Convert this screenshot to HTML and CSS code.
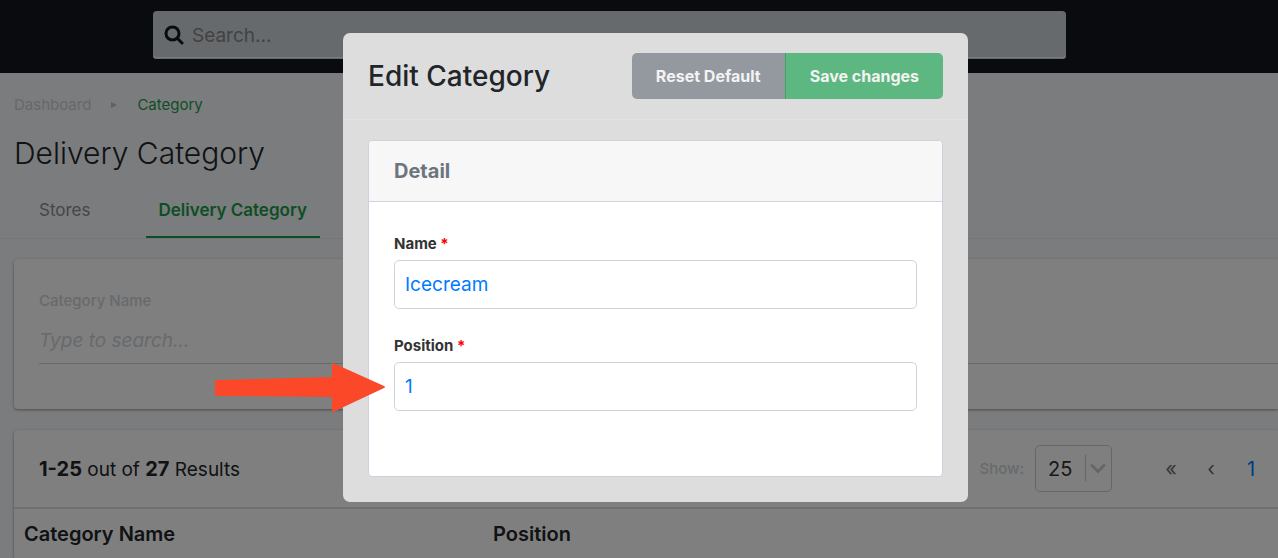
FILE: index.html
```html
<!DOCTYPE html>
<html lang="en">
  <head>
    <meta charset="utf-8" />
    <link rel="stylesheet" href="styles.css">
    <title>Delivery Category</title>
  </head>
  <body>
    <header class="topbar">
      <form class="search">
        <svg class="search-icon" viewBox="0 0 20 20">
          <circle cx="8.5" cy="8.5" r="6.5" />
          <path d="M13.5 13.5L18 18" />
        </svg>
        <input class="search-input" type="text" placeholder="Search..." aria-label="Search" />
      </form>
    </header>

    <main>
      <nav class="breadcrumb">
        <a class="breadcrumb-link" href="#">Dashboard</a>
        <span class="breadcrumb-arrow"></span>
        <a class="breadcrumb-link active" href="#">Category</a>
      </nav>
      <h1 class="page-title">Delivery Category</h1>
      <nav class="tabs">
        <a class="tab" href="#">Stores</a>
        <a class="tab active" href="#">Delivery Category</a>
      </nav>

      <div class="content">
        <section class="card filter">
          <label class="filter-label" for="filter-name">Category Name</label>
          <input class="filter-input" id="filter-name" type="text" placeholder="Type to search..." />
        </section>

        <section class="card">
          <div class="toolbar">
            <div class="results"><b>1-25</b> out of <b>27</b> Results</div>
            <label class="show-label" for="page-size">Show:</label>
            <div class="page-size">
              <select class="page-size-select" id="page-size">
                <option>25</option>
                <option>50</option>
              </select>
              <svg class="page-size-icon" viewBox="0 0 26 26">
                <path class="divider" d="M0.5 0V26" />
                <path class="chevron" d="M7 10.5L13 16.5L19 10.5" />
              </svg>
            </div>
            <div class="pagination">
              <a class="page-link" href="#">«</a>
              <a class="page-link" href="#">‹</a>
              <a class="page-link active" href="#">1</a>
            </div>
          </div>
          <table class="table">
            <thead>
              <tr>
                <th>Category Name</th>
                <th>Position</th>
              </tr>
            </thead>
          </table>
        </section>
      </div>
    </main>

    <div class="overlay">
      <div class="modal" role="dialog" aria-labelledby="modal-title">
        <div class="modal-header">
          <h2 class="modal-title" id="modal-title">Edit Category</h2>
          <div class="btn-group">
            <button class="btn btn-reset" type="button">Reset Default</button>
            <button class="btn btn-save" type="button">Save changes</button>
          </div>
        </div>
        <div class="modal-body">
          <div class="panel">
            <h3 class="panel-header">Detail</h3>
            <form class="panel-body">
              <div class="form-group">
                <label class="form-label" for="name">Name <span class="required">*</span></label>
                <input class="form-input" id="name" type="text" value="Icecream" />
              </div>
              <div class="form-group">
                <label class="form-label" for="position">Position <span class="required">*</span></label>
                <input class="form-input" id="position" type="text" value="1" />
                <svg class="pointer" viewBox="0 0 170 49">
                  <path d="M1 17L117 14V1Q117 0 118 0L169 23Q171 24 169 25L118 49Q117 49 117 48V34L1 33Q0 33 0 32V18Q0 17 1 17Z" />
                </svg>
              </div>
            </form>
          </div>
        </div>
      </div>
    </div>
  </body>
</html>
```
FILE: styles.css
```css
* {
  box-sizing: border-box;
}
body {
  margin: 0;
  height: 100vh;
  overflow: hidden;
  background-color: #f6f8fc;
  color: #212529;
  font-family: Inter, "Liberation Sans", sans-serif;
  font-size: 20px;
}
a {
  text-decoration: none;
}
input,
select,
button {
  font-family: inherit;
}

.topbar {
  padding: 11px 212px 14px 153px;
  background-color: #14161f;
}
.search {
  display: flex;
  align-items: center;
  gap: 8px;
  height: 48px;
  padding-left: 11px;
  background-color: #ccd4d8;
  border-radius: 4px;
  box-shadow: inset 0 -1px #ccd4d8, inset 0 -2px #f4f6f8;
}
.search-icon {
  width: 20px;
  height: 20px;
  fill: none;
  stroke: #14161f;
  stroke-width: 3;
  stroke-linecap: round;
}
.search-input {
  flex: 1;
  padding: 0;
  border: 0;
  background: transparent;
  font-size: 19px;
}
.search-input::placeholder {
  color: #868686;
}

.breadcrumb {
  display: flex;
  align-items: center;
  gap: 20px;
  padding: 20px 14px 0;
  font-size: 15px;
  line-height: 24px;
}
.breadcrumb-link {
  color: #ced0d6;
}
.breadcrumb-link.active {
  color: #1b9f4a;
}
.breadcrumb-arrow {
  border-left: 6px solid #bfc2c8;
  border-top: 3px solid transparent;
  border-bottom: 3px solid transparent;
}

.page-title {
  margin: 0;
  padding: 16px 14px 0;
  font-size: 30px;
  font-weight: 300;
  line-height: 40px;
}

.tabs {
  display: flex;
  gap: 42px;
  padding-left: 26px;
  border-bottom: 1px solid #e9ebf0;
}
.tab {
  padding: 24px 13px 13px;
  border-bottom: 2px solid transparent;
  color: #8a8d93;
  font-size: 17px;
  line-height: 26px;
}
.tab.active {
  border-color: #1b9f4a;
  color: #1b9f4a;
  font-weight: 600;
}

.content {
  display: flex;
  flex-direction: column;
  gap: 21px;
  padding: 20px 0 0 14px;
}
.card {
  background-color: #fff;
  border-radius: 4px 0 0 4px;
  box-shadow: 0 1px 3px rgba(0, 0, 0, 0.4);
}
.filter {
  padding: 30px 0 45px 25px;
}
.filter-label {
  display: block;
  color: #ced4da;
  font-size: 15px;
  font-weight: 500;
  line-height: 24px;
}
.filter-input {
  display: block;
  width: 100%;
  height: 51px;
  padding: 4px 0 0;
  border: 0;
  border-bottom: 1px solid #ced4da;
  background: transparent;
  font-size: 19px;
}
.filter-input::placeholder {
  color: #ced4da;
  font-style: italic;
}

.toolbar {
  display: flex;
  align-items: center;
  height: 79px;
  padding: 0 21px 0 25px;
  border-bottom: 2px solid #e0e0e0;
}
.results {
  flex: 1;
  font-size: 19px;
}
b {
  font-size: 20px;
  font-weight: 700;
}
.show-label {
  margin-right: 11px;
  color: #ced4da;
  font-size: 15px;
  font-weight: 500;
}
.page-size {
  position: relative;
}
.page-size-select {
  display: block;
  width: 77px;
  height: 47px;
  padding: 0 12px;
  appearance: none;
  background: transparent;
  border: 1px solid #ccc;
  border-radius: 5px;
  color: #333;
  font-size: 20px;
}
.page-size-icon {
  position: absolute;
  top: 10px;
  right: 1px;
  width: 26px;
  height: 26px;
  fill: none;
  pointer-events: none;
}
.divider {
  stroke: #ccc;
}
.chevron {
  stroke: #ccc;
  stroke-width: 3;
  stroke-linecap: round;
}
.pagination {
  display: flex;
  gap: 28px;
  padding-left: 53px;
}
.page-link {
  min-width: 12px;
  color: #6c6c6c;
  text-align: center;
}
.page-link.active {
  color: #007bff;
}

.table {
  width: 100%;
  border-collapse: collapse;
  table-layout: fixed;
}
.table th {
  padding: 10px;
  border-bottom: 1px solid #dee2e6;
  font-weight: 600;
  line-height: 30px;
  text-align: left;
}
.table th:first-child {
  width: 469px;
}

.overlay {
  position: fixed;
  inset: 0;
  display: flex;
  justify-content: center;
  align-items: flex-start;
  padding: 33px 0 0 33px;
  background-color: rgba(0, 0, 0, 0.5);
}
.modal {
  width: 100%;
  max-width: 625px;
  background-color: #ddd;
  border-radius: 7px;
}
.modal-header {
  display: flex;
  align-items: center;
  justify-content: space-between;
  padding: 20px 25px;
  border-bottom: 1px solid #e3e3e3;
}
.modal-title {
  margin: 0;
  font-size: 28px;
  font-weight: 500;
}
.btn-group {
  display: flex;
}
.btn {
  height: 46px;
  padding: 0 24px;
  border: 0;
  color: #f3f3f3;
  font-size: 16px;
  font-weight: 700;
}
.btn-reset {
  background-color: #9499a0;
  border-radius: 5px 0 0 5px;
}
.btn-save {
  background-color: #5cb880;
  border-left: 1px solid #41a368;
  border-radius: 0 5px 5px 0;
}
.modal-body {
  padding: 20px 25px 25px;
}
.panel {
  background-color: #fff;
  border: 1px solid #cfd0dc;
  border-radius: 4px;
}
.panel-header {
  margin: 0;
  padding: 15px 25px;
  background-color: #f7f7f7;
  border-bottom: 1px solid #d3d4d9;
  border-radius: 4px 4px 0 0;
  color: #6c757d;
  font-size: 20px;
  font-weight: 700;
  line-height: 30px;
}
.panel-body {
  display: flex;
  flex-direction: column;
  gap: 25px;
  padding: 30px 25px 65px;
}
.form-group {
  position: relative;
}
.form-label {
  display: block;
  margin-bottom: 4px;
  color: #333;
  font-size: 15px;
  font-weight: 700;
  line-height: 24px;
}
.required {
  color: #f00;
}
.form-input {
  display: block;
  width: 100%;
  height: 49px;
  padding: 0 10px;
  border: 1px solid #ced4da;
  border-radius: 5px;
  color: #007bff;
  font-size: 19px;
}
.pointer {
  position: absolute;
  left: -179px;
  bottom: -1px;
  width: 170px;
  height: 49px;
  fill: #fb4829;
}
```
